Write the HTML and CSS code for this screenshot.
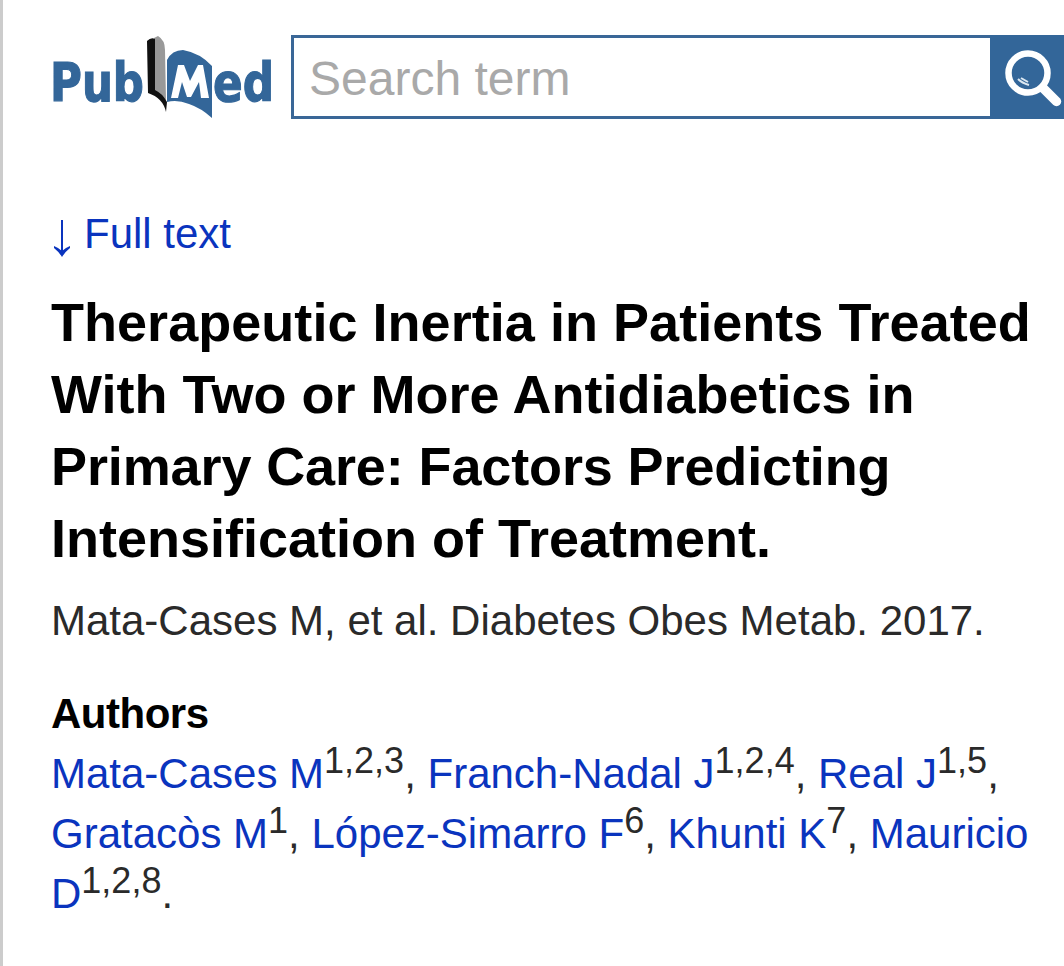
FILE: index.html
```html
<!DOCTYPE html>
<html lang="en">
<head>
<meta charset="utf-8">
<title>PubMed</title>
<link rel="stylesheet" href="styles.css">
</head>
<body>
<div class="page">
  <header class="header">
    <svg class="logo" viewBox="0 0 224 90" role="img" aria-label="PubMed">
      <g class="logo-text">
        <text x="-1" y="69" textLength="94" lengthAdjust="spacingAndGlyphs">Pub</text>
        <text x="162" y="69" textLength="61" lengthAdjust="spacingAndGlyphs">ed</text>
      </g>
      <path fill="#999" d="M103 6 L107 4 Q114 8 114 18 L115 69 Q112 66 109 63 L103 59Z"/>
      <path fill="#111" d="M96 9 Q100 5 104 7 L104 58 Q111 61 116 70 L115 80 Q112 66 97 61Z"/>
      <path fill="#336699" d="M116 28 Q121 18 132 18 Q149 21 161 34 L161 86 Q150 76 138 72 Q126 67 116 70Z"/>
      <path fill="#fff" d="M120 66 L127 33 L133 33 L139 49 L147 33 L152 33 L158 66 L150 66 L148 50 L140 65 L136 65 L131 50 L127 66Z"/>
    </svg>
    <form class="search">
      <input class="search-input" type="text" placeholder="Search term" aria-label="Search term">
      <button class="search-button" type="button" aria-label="Search">
        <svg class="search-icon" viewBox="0 0 74 84">
          <circle cx="38" cy="38" r="19.5" fill="none" stroke="#fff" stroke-width="6.5"/>
          <path d="M53 53 L66.500 66.500" stroke="#fff" stroke-width="9.500" stroke-linecap="round"/>
          <path d="M28 44 Q32 48 39 50 M31 43 L38 47" fill="none" stroke="#dce8f2" stroke-width="2"/>
        </svg>
      </button>
    </form>
  </header>
  <main class="article">
    <a class="full-text">
      <svg class="arrow" viewBox="0 0 18 38"><path d="M8 0V34" stroke="#0a34be" stroke-width="2"/><path fill="#0a34be" d="M0 26 Q5 28 8 31 Q11 28 16 26 V28 Q11 32 8 37 Q5 32 0 28Z"/></svg>
      <span>Full text</span>
    </a>
    <h1 class="title"><span class="t1">Therapeutic Inertia in Patients Treated</span><br><span>With Two or More Antidiabetics in</span><br><span class="t3">Primary Care: Factors Predicting</span><br><span>Intensification of Treatment.</span></h1>
    <p class="citation">Mata-Cases M, et al. Diabetes Obes Metab. 2017.</p>
    <h2 class="heading">Authors</h2>
    <p class="authors"><a>Mata-Cases M</a><sup>1,2,3</sup>, <a>Franch-Nadal J</a><sup>1,2,4</sup>, <a>Real J</a><sup>1,5</sup>,<br><a>Gratacòs M</a><sup>1</sup>, <a>López-Simarro F</a><sup>6</sup>, <a>Khunti K</a><sup>7</sup>, <a>Mauricio<br>D</a><sup>1,2,8</sup>.</p>
  </main>
</div>
</body>
</html>
```
FILE: styles.css
```css
* { box-sizing: border-box; }
body { margin: 0; background: #fff; overflow: hidden; }
.page {
  height: 966px;
  padding-top: 35px;
  border-left: 3px solid #ccc;
  font-family: "Liberation Sans", Arial, sans-serif;
  font-size: 42px;
  line-height: 60px;
  color: #2a2a2a;
}
.header { display: flex; padding-left: 48px; height: 84px; }
.logo { width: 224px; height: 90px; flex: none; margin: -3px 16px 0 0; overflow: visible; }
.logo-text {
  font: bold 54px "DejaVu Sans", sans-serif;
  fill: #336699;
  stroke: #336699;
  stroke-width: 1.2px;
}
.search { display: flex; flex: 1; margin: 0; }
.search-input {
  flex: 1;
  min-width: 0;
  border: 3px solid #3a6797;
  border-right: 0;
  border-radius: 0;
  padding: 2px 16px 0 15px;
  font: 48px "Liberation Sans", Arial, sans-serif;
  outline: 0;
}
.search-input::placeholder { color: #a9a9a9; }
.search-button {
  width: 74px;
  padding: 0;
  border: 0;
  background: #336699;
}
.search-icon { display: block; width: 74px; height: 84px; }
.article { padding: 85px 0 0 48px; white-space: nowrap; }
.full-text { display: flex; height: 60px; color: #0a34be; }
.arrow { width: 18px; height: 38px; margin: 16px 12px 0 3px; }
.title {
  margin: 22px 0 17px;
  font-size: 54px;
  line-height: 72px;
  color: #000;
}
.t1 { letter-spacing: 0.04px; }
.t3 { letter-spacing: -0.12px; }
.citation { margin: 0 0 33px; }
.heading { margin: 0; font-size: 42px; line-height: 60px; letter-spacing: -0.5px; color: #000; }
.authors { margin: 0; }
.authors a { color: #0a34be; }
.authors sup {
  position: relative;
  top: -15px;
  font-size: 36px;
  line-height: 0;
  vertical-align: baseline;
}
```
